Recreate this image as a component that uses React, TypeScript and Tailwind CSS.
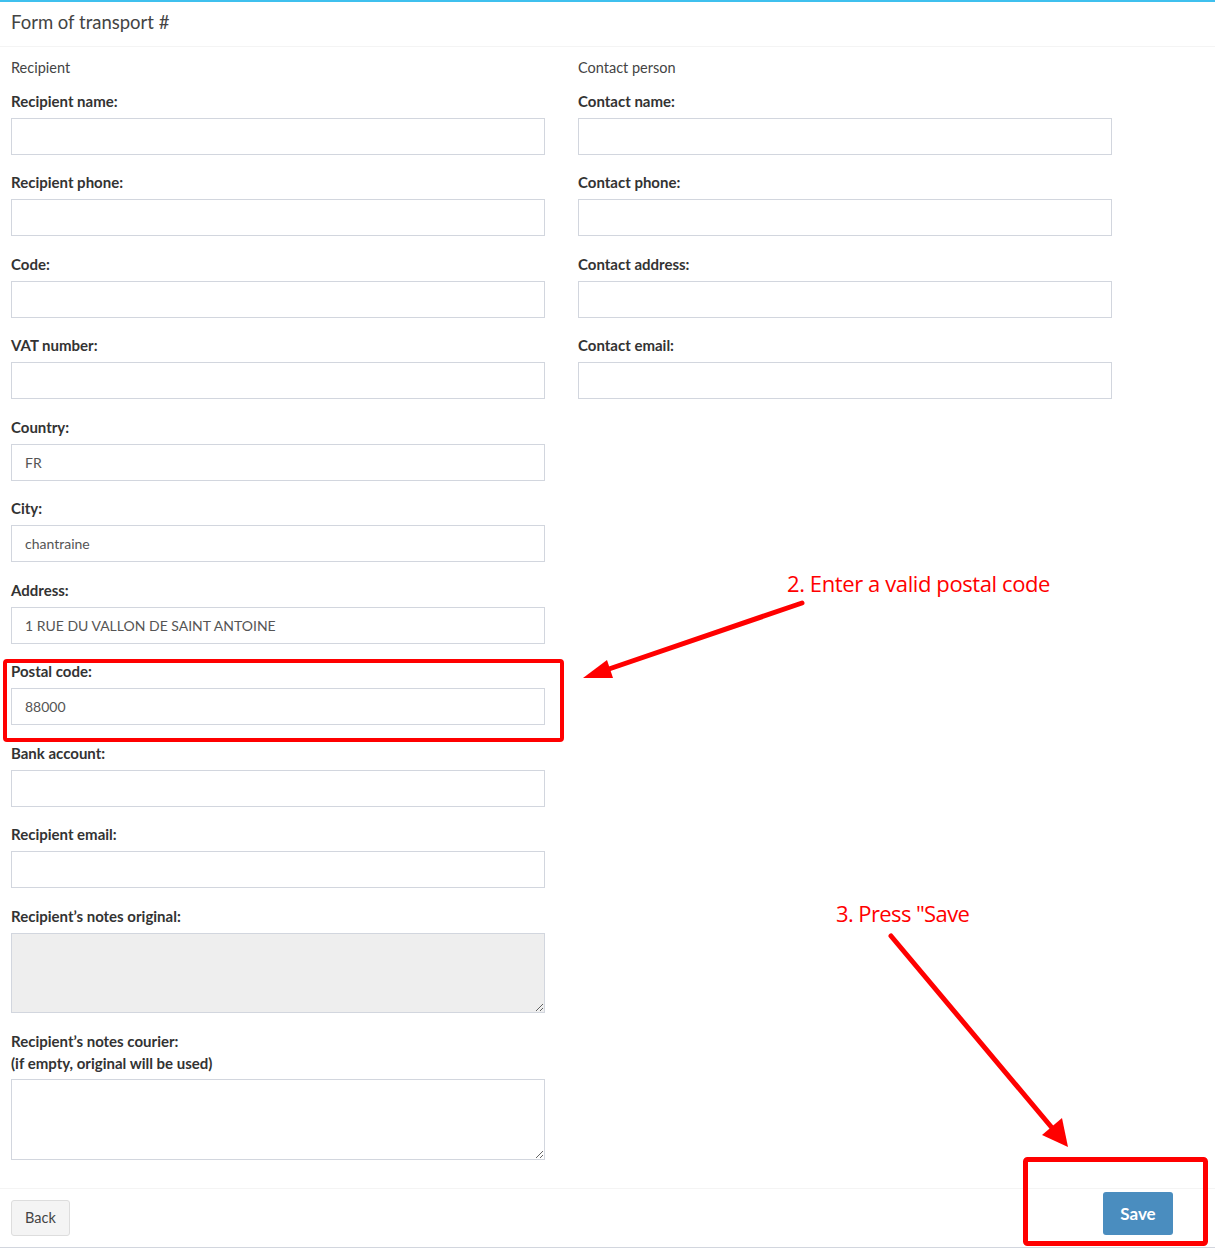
import React from 'react';

const leftFields = [
  { label: 'Recipient name:', value: '' },
  { label: 'Recipient phone:', value: '' },
  { label: 'Code:', value: '' },
  { label: 'VAT number:', value: '' },
  { label: 'Country:', value: 'FR' },
  { label: 'City:', value: 'chantraine' },
  { label: 'Address:', value: '1 RUE DU VALLON DE SAINT ANTOINE' },
  { label: 'Postal code:', value: '88000' },
  { label: 'Bank account:', value: '' },
  { label: 'Recipient email:', value: '' },
];

const rightFields = [
  { label: 'Contact name:', value: '' },
  { label: 'Contact phone:', value: '' },
  { label: 'Contact address:', value: '' },
  { label: 'Contact email:', value: '' },
];

function Field({ label, value }: { label: string; value: string }) {
  return (
    <div className="mb-[17.5px]">
      <label className="block h-[20px] leading-[20px] mb-[7px] text-[15px] font-bold text-[#333]">{label}</label>
      <input
        type="text"
        defaultValue={value}
        className="block w-full h-[37px] border border-[#d2d6de] px-[13px] text-[14px] text-[#555] outline-none"
      />
    </div>
  );
}

// red arrows + boxes drawn over the form
function Annotations() {
  return (
    <>
      <svg className="absolute inset-0 pointer-events-none" width={1215} height={1249}>
        <rect x={5} y={661} width={557} height={79} rx={2} fill="none" stroke="#ff0000" strokeWidth={4} />
        <rect x={1025.5} y={1159.5} width={180} height={84} rx={2} fill="none" stroke="#ff0000" strokeWidth={5} />
        <line x1={802} y1={603} x2={606} y2={670} stroke="#ff0000" strokeWidth={5} strokeLinecap="round" />
        <polygon points="583,678 607,660 613,678" fill="#ff0000" />
        <line x1={891} y1={936} x2={1053} y2={1129} stroke="#ff0000" strokeWidth={5} strokeLinecap="round" />
        <polygon points="1068,1147 1042,1135 1062,1118" fill="#ff0000" />
      </svg>
      <div className="absolute left-[787px] top-[568px] text-[22px] leading-[30px] text-[#ff0000] font-['Open_Sans',sans-serif] tracking-[-0.4px]">
        2. Enter a valid postal code
      </div>
      <div className="absolute left-[836px] top-[898px] text-[22px] leading-[30px] text-[#ff0000] font-['Open_Sans',sans-serif] tracking-[-0.6px]">
        3. Press "Save
      </div>
    </>
  );
}

export default function App() {
  return (
    <div className="relative w-[1215px] h-[1249px] bg-white font-['Lato',sans-serif] overflow-hidden">
      <div className="border-t-2 border-[#3fc0ee] border-b border-b-[#d2d6de]">
        <div className="h-[45px] px-[11px] flex items-center pb-[3px] border-b border-[#f4f4f4] text-[18.5px] text-[#444]">
          Form of transport #
        </div>

        <div className="px-[11px] pt-[11px] grid grid-cols-[534px_534px] gap-x-[33px]">
          <div>
            <div className="h-[20px] leading-[20px] mb-[12.6px] text-[14.5px] text-[#444]">Recipient</div>
            {leftFields.map((f) => (
              <Field key={f.label} label={f.label} value={f.value} />
            ))}
            <div className="mb-[17.5px]">
              <label className="block h-[20px] leading-[20px] mb-[7px] text-[15px] font-bold text-[#333]">Recipient’s notes original:</label>
              <textarea readOnly className="block w-full h-[80px] border border-[#d2d6de] bg-[#eeeeee] outline-none" />
            </div>
            <div>
              <label className="block leading-[22px] mb-[5px] text-[15px] font-bold text-[#333]">
                Recipient’s notes courier:
                <br />
                (if empty, original will be used)
              </label>
              <textarea className="block w-full h-[81px] border border-[#d2d6de] outline-none" />
            </div>
          </div>
          <div>
            <div className="h-[20px] leading-[20px] mb-[12.6px] text-[14.5px] text-[#444]">Contact person</div>
            {rightFields.map((f) => (
              <Field key={f.label} label={f.label} value={f.value} />
            ))}
          </div>
        </div>

        <div className="mt-[28px] border-t border-[#f4f4f4] pl-[11px] pr-[42px] pt-[11px] pb-[11px] flex justify-between items-start">
          <button className="h-[36px] px-[13px] bg-[#f4f4f4] border border-[#dddddd] rounded-[3px] text-[14.5px] text-[#444]">
            Back
          </button>
          <button className="-mt-[8px] h-[43px] w-[70px] bg-[#4a8dbf] rounded-[3px] text-[17px] font-bold text-white">
            Save
          </button>
        </div>
      </div>

      <Annotations />
    </div>
  );
}
